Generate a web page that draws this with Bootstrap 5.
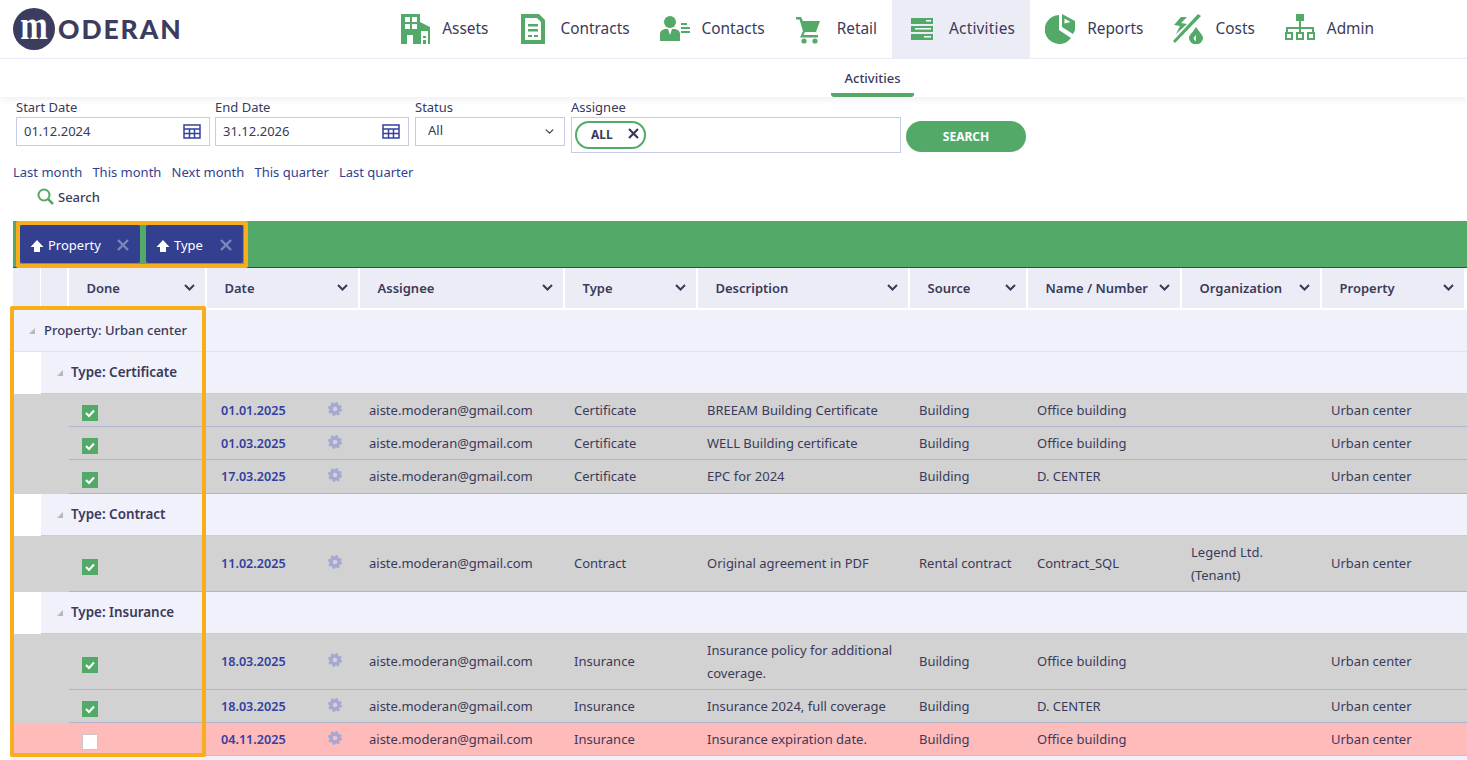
<!DOCTYPE html>
<html lang="en"><head><meta charset="utf-8"><title>Activities</title>
<link href="https://cdn.jsdelivr.net/npm/bootstrap@5.3.0/dist/css/bootstrap.min.css" rel="stylesheet">
<style>
:root{--gr:#53aa68;--nv:#333f8f;--tx:#3a3a5a;}
html,body{height:100%;overflow:hidden;}
body{font-family:"Noto Sans","Open Sans",sans-serif;font-size:13px;color:var(--tx);background:#fff;position:relative;}
.topbar{height:59px;border-bottom:1px solid #ecedfa;}
.logo-disc{width:42px;height:42px;border-radius:50%;background:#3b3c5e;color:#fff;font:bold 33px/34px "Liberation Serif",serif;text-align:center;margin-left:13px;flex:none;}
.logo-disc span{display:inline-block;transform:scale(1,1.3);}
.logo-word{font:900 26.5px/1 "Lato","Liberation Sans",sans-serif;color:#3b3c5e;margin-left:3px;letter-spacing:1.9px;}
.mainnav{margin-left:auto;margin-right:78px;}
.mainnav a{display:flex;align-items:center;gap:12px;height:58px;padding:0 15px;color:var(--tx);font-size:15.4px;text-decoration:none;}
.mainnav a.on{background:#ebecf5;letter-spacing:.2px;}
.mainnav svg{width:30px;height:30px;fill:var(--gr);flex:none;}
.subbar{height:38px;box-shadow:0 3px 6px rgba(60,60,120,.07);position:relative;}
.subtab{display:block;width:83px;height:38px;line-height:38px;text-align:center;font-weight:500;color:var(--tx);text-decoration:none;border-bottom:4px solid var(--gr);border-radius:0 0 3px 3px;font-size:13px;}
.filters{padding:2px 0 0 16px;gap:5px;height:60px;}
.fld label{display:block;font-size:13px;line-height:16px;margin:0 0 2px;}
.dt-wrap{position:relative;width:194px;}
.fld .form-control,.fld .form-select{height:29px;border-radius:0;border:1px solid #c7cbe8;font-size:13px;color:var(--tx);padding:0 7px 1px;box-shadow:none;}
.fld .form-select{width:150px;padding-left:12px;background-position:right 9px center;background-size:11px 9px;}
.dt-wrap svg{position:absolute;right:9px;top:7px;width:18px;height:15px;}
.gap1{margin-left:1px;}
.asg{width:330px;height:36px;border:1px solid #c7cbe8;padding:3px;}
.chip-all{display:flex;align-items:center;height:28px;width:71px;border:2px solid var(--gr);border-radius:14px;font-weight:700;font-size:12px;padding-left:14px;gap:15px;}
.chip-all svg{width:11px;height:11px;stroke:#3a3a5a;stroke-width:2.200;margin-top:-3px;}
.go{width:120px;height:31px;border-radius:16px;background:var(--gr);color:#fff;border:0;font-size:12px;font-weight:700;margin-top:22px;padding:0;}
.quick{padding-left:13px;gap:10.2px;height:22px;margin-top:4px;}
.quick a{color:var(--nv);text-decoration:none;line-height:22px;}
.srch{margin:4px 0 0 37px;height:22px;gap:4px;font-weight:500;}
.srch svg{width:17px;height:18px;margin-top:-3px;}
.groupbar{margin:12px 0 0 13px;height:47px;background:var(--gr);border-bottom:1px solid #444;padding:4px 0 0 7px;gap:6px;}
.gchip{height:38px;background:var(--nv);color:#fff;border-radius:2px;padding:3px 11px 0 10px;gap:4px;font-size:13px;}
.gchip>svg:first-child{width:14px;height:14px;fill:#fff;flex:none;}
.gchip .cx{width:12px;height:12px;stroke:#7f86bc;stroke-width:2.400;margin-left:auto;margin-top:-2px;}
.table.grid{table-layout:fixed;width:1454px;margin:0 0 0 13px;border-collapse:separate;border-spacing:0;color:var(--tx);--bs-table-bg:transparent;--bs-table-color:var(--tx);}
.table.grid>:not(caption)>*>*{border:0;padding:0;background:transparent;vertical-align:middle;line-height:23px;box-shadow:none;font-size:13px;}
.table.grid>thead>tr>th{height:42px;background:#ebecf5;border-right:2px solid #fff;border-bottom:2px solid #fff;font-weight:600;}
.table.grid>thead>tr>th:first-child{border-right-width:1px;}
.th-in{padding:0 10px 0 17.5px;}
.th-in svg{width:11px;height:7px;fill:none;stroke:#3a3a5a;stroke-width:2;margin-top:-2px;flex:none;}
.table.grid>tbody>.lv1>td{height:42px;background:#f0f1fa;border-bottom:1px solid #e0e1f2;font-weight:500;}
.table.grid>tbody>.lv2>td{height:42px;background:#f0f1fa;border-bottom:1px solid #c9cbdf;font-weight:600;font-size:13.4px;}
.table.grid>tbody>.lv2>td.blank{background:#fff;border-bottom-color:#fff;}
.tri{display:inline-block;width:0;height:0;border-style:solid;border-width:0 0 6px 6px;border-color:transparent transparent #b9b9b9 transparent;margin:0 9px 0 16px;vertical-align:1px;}
.lv2 .tri{margin-right:8px;}
.table.grid>tbody>.rw>td{background:#d2d2d2;padding:0 9px;border-bottom:1px solid #b2b4cd;}
.table.grid>tbody>.rw.tall>td{height:56px;}
.table.grid>tbody>.rw.std>td{height:33px;}
.table.grid>tbody>.rw.std.last3>td{height:34px;}
.table.grid>tbody>.rw.red>td{background:#ffbaba;border-bottom-color:#eeaab5;}
.table.grid>tbody>.rw>td.gut{border-bottom-color:transparent;padding:0;}
.table.grid>tbody>.rw>td.ck{padding:6px 0 0 13px;}
.tick{display:block;width:16px;height:16px;background:var(--gr);}
.tick svg{display:block;width:16px;height:16px;fill:none;stroke:#fff;stroke-width:2;}
.tick.off{background:#fff;border:1px solid #c9c9c9;}
.dt{color:#3340a0;font-weight:600;text-decoration:none;font-size:12.6px;}
.table.grid>tbody>.rw>td.dc{padding:0 18px 0 14px;}
.dc svg{width:14px;height:14px;margin-top:-3px;}
.hi{position:absolute;border:4px solid #f6ae1c;border-radius:2px;pointer-events:none;}
.hi-a{left:16px;top:221px;width:232px;height:47px;}
.hi-b{left:10px;top:306px;width:196px;height:451px;}
</style></head><body>
<header class="topbar d-flex align-items-center">
  <div class="logo-disc"><span>m</span></div><div class="logo-word">ODERAN</div>
  <nav class="mainnav d-flex">
    <a href="#"><svg viewBox="0 0 30 30"><path d="M1 0H20V8L30 13V30H1Z"/><path fill="#fff" d="M5 3h5v5H5zM12 3h5v5h-5zM5 10h5v5H5zM12 10h5v5h-5zM7 21h6v9H7zM21 17h7v13h-7z"/><path d="M23 22h3v2h-3zM23 26h3v4h-3z"/></svg>Assets</a>
    <a href="#"><svg viewBox="0 0 30 30"><path d="M3 0H21L27 6V30H3Z"/><path fill="#fff" d="M7 4h12l4 4v18H7z"/><path d="M10 10h10v2.500H10zM10 15h10v2.500H10zM10 21h4v2H10zM16 21h4v2h-4z"/></svg>Contracts</a>
    <a href="#"><svg viewBox="0 0 30 30"><circle cx="10" cy="8" r="6"/><path d="M0 27V20Q0 16 5 15L8 15 10 21 12 15 15 15Q20 16 20 20V27Z"/><path d="M21 9h6v2h-6zM21 13h9v2h-9zM21 17h9v2h-9z"/></svg>Contacts</a>
    <a href="#"><svg viewBox="0 0 30 30"><path d="M1 3H6L8 7H25L21 18H10L8.500 21H23V23.500H5L8 17 4.500 5.500H1Z"/><circle cx="9" cy="27" r="2.600"/><circle cx="20" cy="27" r="2.600"/></svg>Retail</a>
    <a href="#" class="on"><svg viewBox="0 0 30 30"><path d="M4 4h22v6H4zM4 12h22v6H4zM4 20h22v6H4z"/><path fill="#fff" d="M19 6h5v1.500h-5zM8 14h16v1.500H8zM17 22h7v1.500h-7z"/></svg>Activities</a>
    <a href="#"><svg viewBox="0 0 30 30"><path d="M14 1V16L26 24A14.500 14.500 0 1 1 14 1Z"/><path fill-rule="evenodd" d="M17 0 30 7A15 15 0 0 1 28 20L17 13ZM19.500 4.500V9.500L25.500 8Z"/></svg>Reports</a>
    <a href="#"><svg viewBox="0 0 30 30"><path d="M8 3h6L8 9l6 1L3 20l4-8-6-1zM25 0l3 2L2 29l-2-2z"/><path fill-rule="evenodd" d="M23 13C27 19 30 21 30 24A7 6.500 0 0 1 16 24C16 21 20 18 23 13ZM23 21 20.500 24A3 3 0 0 0 23 27Z"/></svg>Costs</a>
    <a href="#"><svg viewBox="0 0 30 30"><path d="M11 0h8v7h-8zM14 7h2v6h13v5h-2v-3H16v3h-2v-3H3v3H1v-5h13z"/><path fill-rule="evenodd" d="M0 18h8v8H0zM2 20v4h4v-4zM11 18h8v8h-8zM13 20v4h4v-4zM22 18h8v8h-8zM24 20v4h4v-4z"/></svg>Admin</a>
  </nav>
</header>
<div class="subbar d-flex"><a class="subtab" href="#" style="margin-left:831px">Activities</a></div>
<form class="filters d-flex align-items-start">
  <div class="fld"><label>Start Date</label><div class="dt-wrap"><input class="form-control" value="01.12.2024" readonly><svg viewBox="0 0 18 15"><path fill="none" stroke="#3340a0" stroke-width="1.500" d="M1 1h16v13H1zM1 5h16M1 9.500h16M6.500 5v9M11.500 5v9"/></svg></div></div>
  <div class="fld"><label>End Date</label><div class="dt-wrap"><input class="form-control" value="31.12.2026" readonly><svg viewBox="0 0 18 15"><path fill="none" stroke="#3340a0" stroke-width="1.500" d="M1 1h16v13H1zM1 5h16M1 9.500h16M6.500 5v9M11.500 5v9"/></svg></div></div>
  <div class="fld gap1"><label>Status</label><select class="form-select"><option>All</option></select></div>
  <div class="fld gap1"><label>Assignee</label><div class="asg"><div class="chip-all"><span>ALL</span><svg viewBox="0 0 11 11"><path d="M1 1l9 9M10 1l-9 9"/></svg></div></div></div>
  <button type="button" class="go">SEARCH</button>
</form>
<div class="quick d-flex"><a href="#">Last month</a><a href="#">This month</a><a href="#">Next month</a><a href="#">This quarter</a><a href="#">Last quarter</a></div>
<div class="srch d-flex align-items-center"><svg viewBox="0 0 17 18"><circle cx="7" cy="7" r="5.500" fill="none" stroke="#53aa68" stroke-width="2"/><path d="M11 11l5 5" stroke="#53aa68" stroke-width="2.500"/></svg><span>Search</span></div>
<div class="groupbar d-flex">
  <div class="gchip d-flex align-items-center" style="width:120px"><svg viewBox="0 0 14 14"><path d="M7 1 13.500 8H10V13H4V8H.5Z"/></svg><span>Property</span><svg class="cx" viewBox="0 0 12 12"><path d="M1 1l10 10M11 1 1 11"/></svg></div>
  <div class="gchip d-flex align-items-center" style="width:97px"><svg viewBox="0 0 14 14"><path d="M7 1 13.500 8H10V13H4V8H.5Z"/></svg><span>Type</span><svg class="cx" viewBox="0 0 12 12"><path d="M1 1l10 10M11 1 1 11"/></svg></div>
</div>
<table class="table grid mb-0">
<colgroup><col style="width:28px"><col style="width:28px"><col style="width:138px"><col style="width:153px"><col style="width:205px"><col style="width:133px"><col style="width:212px"><col style="width:118px"><col style="width:154px"><col style="width:140px"><col style="width:144px"><col></colgroup>
<thead><tr><th></th><th></th>
<th><div class="th-in d-flex justify-content-between align-items-center">Done<svg viewBox="0 0 11 7"><path d="M1 1l4.500 4.500L10 1"/></svg></div></th>
<th><div class="th-in d-flex justify-content-between align-items-center">Date<svg viewBox="0 0 11 7"><path d="M1 1l4.500 4.500L10 1"/></svg></div></th>
<th><div class="th-in d-flex justify-content-between align-items-center">Assignee<svg viewBox="0 0 11 7"><path d="M1 1l4.500 4.500L10 1"/></svg></div></th>
<th><div class="th-in d-flex justify-content-between align-items-center">Type<svg viewBox="0 0 11 7"><path d="M1 1l4.500 4.500L10 1"/></svg></div></th>
<th><div class="th-in d-flex justify-content-between align-items-center">Description<svg viewBox="0 0 11 7"><path d="M1 1l4.500 4.500L10 1"/></svg></div></th>
<th><div class="th-in d-flex justify-content-between align-items-center">Source<svg viewBox="0 0 11 7"><path d="M1 1l4.500 4.500L10 1"/></svg></div></th>
<th><div class="th-in d-flex justify-content-between align-items-center">Name / Number<svg viewBox="0 0 11 7"><path d="M1 1l4.500 4.500L10 1"/></svg></div></th>
<th><div class="th-in d-flex justify-content-between align-items-center">Organization<svg viewBox="0 0 11 7"><path d="M1 1l4.500 4.500L10 1"/></svg></div></th>
<th><div class="th-in d-flex justify-content-between align-items-center">Property<svg viewBox="0 0 11 7"><path d="M1 1l4.500 4.500L10 1"/></svg></div></th>
<th style="background:#fff;border:0"></th></tr></thead>
<tbody id="tb">
<tr class="lv1"><td colspan="12"><span class="tri"></span>Property: Urban center</td></tr>
<tr class="lv2"><td class="blank"></td><td colspan="11"><span class="tri"></span>Type: Certificate</td></tr>
<tr class="rw std"><td class="gut" colspan="2"></td><td class="ck"><span class="tick"><svg viewBox="0 0 16 16"><path d="M4 8l3 3 5-5.500"/></svg></span></td><td class="dc"><div class="d-flex justify-content-between align-items-center"><a class="dt" href="#">01.01.2025</a><svg viewBox="0 0 14 14"><circle cx="7" cy="7" r="4" fill="none" stroke="#a5a8d2" stroke-width="3.500"/><circle cx="7" cy="7" r="6" fill="none" stroke="#a5a8d2" stroke-width="2" stroke-dasharray="2.400 2.300"/></svg></div></td><td>aiste.moderan@gmail.com</td><td>Certificate</td><td>BREEAM Building Certificate</td><td>Building</td><td>Office building</td><td></td><td>Urban center</td><td></td></tr>
<tr class="rw std"><td class="gut" colspan="2"></td><td class="ck"><span class="tick"><svg viewBox="0 0 16 16"><path d="M4 8l3 3 5-5.500"/></svg></span></td><td class="dc"><div class="d-flex justify-content-between align-items-center"><a class="dt" href="#">01.03.2025</a><svg viewBox="0 0 14 14"><circle cx="7" cy="7" r="4" fill="none" stroke="#a5a8d2" stroke-width="3.500"/><circle cx="7" cy="7" r="6" fill="none" stroke="#a5a8d2" stroke-width="2" stroke-dasharray="2.400 2.300"/></svg></div></td><td>aiste.moderan@gmail.com</td><td>Certificate</td><td>WELL Building certificate</td><td>Building</td><td>Office building</td><td></td><td>Urban center</td><td></td></tr>
<tr class="rw std last3"><td class="gut" colspan="2"></td><td class="ck"><span class="tick"><svg viewBox="0 0 16 16"><path d="M4 8l3 3 5-5.500"/></svg></span></td><td class="dc"><div class="d-flex justify-content-between align-items-center"><a class="dt" href="#">17.03.2025</a><svg viewBox="0 0 14 14"><circle cx="7" cy="7" r="4" fill="none" stroke="#a5a8d2" stroke-width="3.500"/><circle cx="7" cy="7" r="6" fill="none" stroke="#a5a8d2" stroke-width="2" stroke-dasharray="2.400 2.300"/></svg></div></td><td>aiste.moderan@gmail.com</td><td>Certificate</td><td>EPC for 2024</td><td>Building</td><td>D. CENTER</td><td></td><td>Urban center</td><td></td></tr>
<tr class="lv2"><td class="blank"></td><td colspan="11"><span class="tri"></span>Type: Contract</td></tr>
<tr class="rw tall"><td class="gut" colspan="2"></td><td class="ck"><span class="tick"><svg viewBox="0 0 16 16"><path d="M4 8l3 3 5-5.500"/></svg></span></td><td class="dc"><div class="d-flex justify-content-between align-items-center"><a class="dt" href="#">11.02.2025</a><svg viewBox="0 0 14 14"><circle cx="7" cy="7" r="4" fill="none" stroke="#a5a8d2" stroke-width="3.500"/><circle cx="7" cy="7" r="6" fill="none" stroke="#a5a8d2" stroke-width="2" stroke-dasharray="2.400 2.300"/></svg></div></td><td>aiste.moderan@gmail.com</td><td>Contract</td><td>Original agreement in PDF</td><td>Rental contract</td><td>Contract_SQL</td><td>Legend Ltd. (Tenant)</td><td>Urban center</td><td></td></tr>
<tr class="lv2"><td class="blank"></td><td colspan="11"><span class="tri"></span>Type: Insurance</td></tr>
<tr class="rw tall"><td class="gut" colspan="2"></td><td class="ck"><span class="tick"><svg viewBox="0 0 16 16"><path d="M4 8l3 3 5-5.500"/></svg></span></td><td class="dc"><div class="d-flex justify-content-between align-items-center"><a class="dt" href="#">18.03.2025</a><svg viewBox="0 0 14 14"><circle cx="7" cy="7" r="4" fill="none" stroke="#a5a8d2" stroke-width="3.500"/><circle cx="7" cy="7" r="6" fill="none" stroke="#a5a8d2" stroke-width="2" stroke-dasharray="2.400 2.300"/></svg></div></td><td>aiste.moderan@gmail.com</td><td>Insurance</td><td>Insurance policy for additional coverage.</td><td>Building</td><td>Office building</td><td></td><td>Urban center</td><td></td></tr>
<tr class="rw std"><td class="gut" colspan="2"></td><td class="ck"><span class="tick"><svg viewBox="0 0 16 16"><path d="M4 8l3 3 5-5.500"/></svg></span></td><td class="dc"><div class="d-flex justify-content-between align-items-center"><a class="dt" href="#">18.03.2025</a><svg viewBox="0 0 14 14"><circle cx="7" cy="7" r="4" fill="none" stroke="#a5a8d2" stroke-width="3.500"/><circle cx="7" cy="7" r="6" fill="none" stroke="#a5a8d2" stroke-width="2" stroke-dasharray="2.400 2.300"/></svg></div></td><td>aiste.moderan@gmail.com</td><td>Insurance</td><td>Insurance 2024, full coverage</td><td>Building</td><td>D. CENTER</td><td></td><td>Urban center</td><td></td></tr>
<tr class="rw std red"><td class="gut" colspan="2"></td><td class="ck"><span class="tick off"></span></td><td class="dc"><div class="d-flex justify-content-between align-items-center"><a class="dt" href="#">04.11.2025</a><svg viewBox="0 0 14 14"><circle cx="7" cy="7" r="4" fill="none" stroke="#a5a8d2" stroke-width="3.500"/><circle cx="7" cy="7" r="6" fill="none" stroke="#a5a8d2" stroke-width="2" stroke-dasharray="2.400 2.300"/></svg></div></td><td>aiste.moderan@gmail.com</td><td>Insurance</td><td>Insurance expiration date.</td><td>Building</td><td>Office building</td><td></td><td>Urban center</td><td></td></tr>
<tr class="lv1"><td colspan="12"></td></tr>
</tbody></table>
<div class="hi hi-a"></div><div class="hi hi-b"></div>
<script src="https://cdn.jsdelivr.net/npm/bootstrap@5.3.0/dist/js/bootstrap.bundle.min.js"></script>
</body></html>
